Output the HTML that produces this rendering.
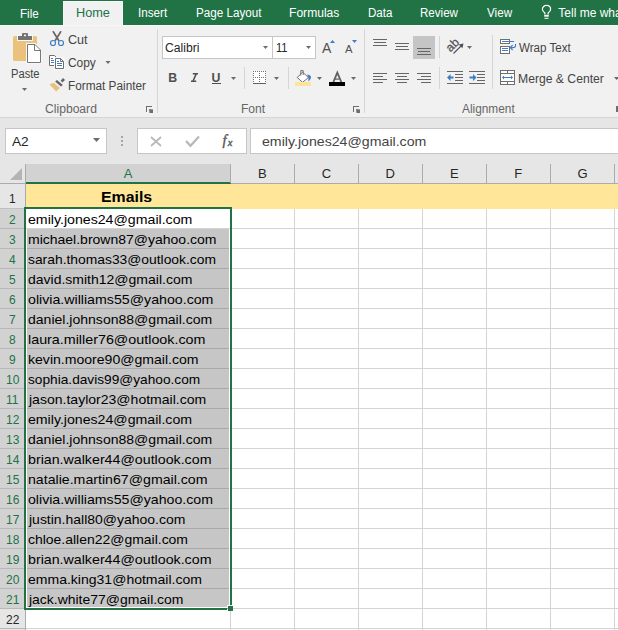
<!DOCTYPE html>
<html><head><meta charset="utf-8"><style>
html,body{margin:0;padding:0;width:618px;height:630px;overflow:hidden;background:#fff;}
body>div{position:absolute;}
.t{position:absolute;white-space:pre;font-family:"Liberation Sans",sans-serif;transform-origin:0 0;}
svg{position:absolute;left:0;top:0;}
</style></head><body>
<div style="left:0px;top:0px;width:618px;height:25px;background:#217346;"></div>
<div style="left:63px;top:1px;width:60px;height:25px;background:#f1f1f1;"></div>
<div class="t" style="left:19.97px;top:4px;font-size:12px;line-height:20px;color:#ffffff;transform:scaleX(0.9708);">File</div>
<div class="t" style="left:75.68px;top:3px;font-size:12px;line-height:20px;color:#217346;transform:scaleX(1.0597);">Home</div>
<div class="t" style="left:137.70px;top:3px;font-size:12px;line-height:20px;color:#ffffff;transform:scaleX(0.9719);">Insert</div>
<div class="t" style="left:195.67px;top:3px;font-size:12px;line-height:20px;color:#ffffff;transform:scaleX(0.9705);">Page Layout</div>
<div class="t" style="left:289.03px;top:3px;font-size:12px;line-height:20px;color:#ffffff;transform:scaleX(1.0070);">Formulas</div>
<div class="t" style="left:367.57px;top:3px;font-size:12px;line-height:20px;color:#ffffff;transform:scaleX(0.9647);">Data</div>
<div class="t" style="left:420.07px;top:3px;font-size:12px;line-height:20px;color:#ffffff;transform:scaleX(0.9635);">Review</div>
<div class="t" style="left:486.94px;top:3px;font-size:12px;line-height:20px;color:#ffffff;transform:scaleX(0.9713);">View</div>
<div class="t" style="left:558.36px;top:3px;font-size:12px;line-height:20px;color:#ffffff;">Tell me what you want to do</div>
<div style="left:0px;top:25px;width:618px;height:92px;background:#f1f1f1;"></div>
<div style="left:0px;top:117px;width:618px;height:1px;background:#d5d5d5;"></div>
<div class="t" style="left:10.91px;top:64px;font-size:12px;line-height:20px;color:#444444;transform:scaleX(0.9294);">Paste</div>
<div class="t" style="left:67.67px;top:30px;font-size:12px;line-height:20px;color:#444444;transform:scaleX(1.0500);">Cut</div>
<div class="t" style="left:68.10px;top:53px;font-size:12px;line-height:20px;color:#444444;transform:scaleX(0.9920);">Copy</div>
<div class="t" style="left:67.76px;top:76px;font-size:12px;line-height:20px;color:#444444;transform:scaleX(0.9823);">Format Painter</div>
<div class="t" style="left:44.69px;top:99px;font-size:12px;line-height:20px;color:#666666;transform:scaleX(1.0104);">Clipboard</div>
<div class="t" style="left:240.73px;top:99px;font-size:12px;line-height:20px;color:#666666;transform:scaleX(1.0052);">Font</div>
<div class="t" style="left:462.20px;top:99px;font-size:12px;line-height:20px;color:#666666;transform:scaleX(0.9872);">Alignment</div>
<div class="t" style="left:519.34px;top:38px;font-size:12px;line-height:20px;color:#444444;transform:scaleX(0.9644);">Wrap Text</div>
<div class="t" style="left:518.33px;top:69px;font-size:12px;line-height:20px;color:#444444;transform:scaleX(1.0141);">Merge &amp; Center</div>
<div style="left:157px;top:29px;width:1px;height:84px;background:#d5d5d5;"></div>
<div style="left:364px;top:29px;width:1px;height:84px;background:#d5d5d5;"></div>
<div style="left:162px;top:36px;width:154px;height:23px;background:#ffffff;box-sizing:border-box;border:1px solid #c6c6c6;"></div>
<div style="left:272px;top:36px;width:1px;height:23px;background:#c6c6c6;"></div>
<div class="t" style="left:164.99px;top:38px;font-size:12px;line-height:20px;color:#262626;transform:scaleX(1.0129);">Calibri</div>
<div class="t" style="left:275.97px;top:38px;font-size:12px;line-height:20px;color:#262626;transform:scaleX(0.9199);">11</div>
<div style="left:244px;top:67px;width:1px;height:22px;background:#d5d5d5;"></div>
<div style="left:288px;top:67px;width:1px;height:22px;background:#d5d5d5;"></div>
<div style="left:439px;top:36px;width:1px;height:22px;background:#d5d5d5;"></div>
<div style="left:439px;top:67px;width:1px;height:22px;background:#d5d5d5;"></div>
<div style="left:492px;top:35px;width:1px;height:54px;background:#d5d5d5;"></div>
<div style="left:413px;top:36px;width:22px;height:23px;background:#c5c5c5;"></div>
<div style="left:0px;top:118px;width:618px;height:46px;background:#e6e6e6;"></div>
<div style="left:5px;top:128px;width:102px;height:26px;background:#ffffff;box-sizing:border-box;border:1px solid #c6c6c6;"></div>
<div class="t" style="left:12.00px;top:132px;font-size:13px;line-height:20px;color:#262626;transform:scaleX(1.0519);">A2</div>
<div style="left:137px;top:128px;width:110px;height:26px;background:#ffffff;box-sizing:border-box;border:1px solid #c6c6c6;"></div>
<div style="left:250px;top:128px;width:380px;height:26px;background:#ffffff;box-sizing:border-box;border:1px solid #c6c6c6;"></div>
<div class="t" style="left:261.93px;top:132px;font-size:13px;line-height:20px;color:#444444;transform:scaleX(1.0887);">emily.jones24@gmail.com</div>
<div style="left:0px;top:164px;width:618px;height:20px;background:#e6e6e6;"></div>
<div style="left:26px;top:164px;width:205px;height:20px;background:#d2d2d2;"></div>
<div style="left:0px;top:183px;width:618px;height:1px;background:#ababab;"></div>
<div style="left:25px;top:182px;width:206px;height:2px;background:#217346;"></div>
<div style="left:26px;top:184px;width:592px;height:446px;background:#ffffff;"></div>
<div style="left:0px;top:184px;width:25px;height:446px;background:#e6e6e6;"></div>
<div style="left:0px;top:209px;width:25px;height:400px;background:#d2d2d2;"></div>
<div style="left:25px;top:164px;width:1px;height:466px;background:#ababab;"></div>
<div style="left:230px;top:164px;width:1px;height:19px;background:#ababab;"></div>
<div style="left:230px;top:209px;width:1px;height:421px;background:#d4d4d4;"></div>
<div style="left:294px;top:164px;width:1px;height:19px;background:#ababab;"></div>
<div style="left:294px;top:209px;width:1px;height:421px;background:#d4d4d4;"></div>
<div style="left:358px;top:164px;width:1px;height:19px;background:#ababab;"></div>
<div style="left:358px;top:209px;width:1px;height:421px;background:#d4d4d4;"></div>
<div style="left:422px;top:164px;width:1px;height:19px;background:#ababab;"></div>
<div style="left:422px;top:209px;width:1px;height:421px;background:#d4d4d4;"></div>
<div style="left:486px;top:164px;width:1px;height:19px;background:#ababab;"></div>
<div style="left:486px;top:209px;width:1px;height:421px;background:#d4d4d4;"></div>
<div style="left:550px;top:164px;width:1px;height:19px;background:#ababab;"></div>
<div style="left:550px;top:209px;width:1px;height:421px;background:#d4d4d4;"></div>
<div style="left:614px;top:164px;width:1px;height:19px;background:#ababab;"></div>
<div style="left:614px;top:209px;width:1px;height:421px;background:#d4d4d4;"></div>
<div style="left:26px;top:228px;width:592px;height:1px;background:#d4d4d4;"></div>
<div style="left:26px;top:248px;width:592px;height:1px;background:#d4d4d4;"></div>
<div style="left:26px;top:268px;width:592px;height:1px;background:#d4d4d4;"></div>
<div style="left:26px;top:288px;width:592px;height:1px;background:#d4d4d4;"></div>
<div style="left:26px;top:308px;width:592px;height:1px;background:#d4d4d4;"></div>
<div style="left:26px;top:328px;width:592px;height:1px;background:#d4d4d4;"></div>
<div style="left:26px;top:348px;width:592px;height:1px;background:#d4d4d4;"></div>
<div style="left:26px;top:368px;width:592px;height:1px;background:#d4d4d4;"></div>
<div style="left:26px;top:388px;width:592px;height:1px;background:#d4d4d4;"></div>
<div style="left:26px;top:408px;width:592px;height:1px;background:#d4d4d4;"></div>
<div style="left:26px;top:428px;width:592px;height:1px;background:#d4d4d4;"></div>
<div style="left:26px;top:448px;width:592px;height:1px;background:#d4d4d4;"></div>
<div style="left:26px;top:468px;width:592px;height:1px;background:#d4d4d4;"></div>
<div style="left:26px;top:488px;width:592px;height:1px;background:#d4d4d4;"></div>
<div style="left:26px;top:508px;width:592px;height:1px;background:#d4d4d4;"></div>
<div style="left:26px;top:528px;width:592px;height:1px;background:#d4d4d4;"></div>
<div style="left:26px;top:548px;width:592px;height:1px;background:#d4d4d4;"></div>
<div style="left:26px;top:568px;width:592px;height:1px;background:#d4d4d4;"></div>
<div style="left:26px;top:588px;width:592px;height:1px;background:#d4d4d4;"></div>
<div style="left:26px;top:608px;width:592px;height:1px;background:#d4d4d4;"></div>
<div style="left:26px;top:628px;width:592px;height:1px;background:#d4d4d4;"></div>
<div style="left:0px;top:208px;width:25px;height:1px;background:#c0c0c0;"></div>
<div style="left:0px;top:228px;width:25px;height:1px;background:#b8b8b8;"></div>
<div style="left:0px;top:248px;width:25px;height:1px;background:#b8b8b8;"></div>
<div style="left:0px;top:268px;width:25px;height:1px;background:#b8b8b8;"></div>
<div style="left:0px;top:288px;width:25px;height:1px;background:#b8b8b8;"></div>
<div style="left:0px;top:308px;width:25px;height:1px;background:#b8b8b8;"></div>
<div style="left:0px;top:328px;width:25px;height:1px;background:#b8b8b8;"></div>
<div style="left:0px;top:348px;width:25px;height:1px;background:#b8b8b8;"></div>
<div style="left:0px;top:368px;width:25px;height:1px;background:#b8b8b8;"></div>
<div style="left:0px;top:388px;width:25px;height:1px;background:#b8b8b8;"></div>
<div style="left:0px;top:408px;width:25px;height:1px;background:#b8b8b8;"></div>
<div style="left:0px;top:428px;width:25px;height:1px;background:#b8b8b8;"></div>
<div style="left:0px;top:448px;width:25px;height:1px;background:#b8b8b8;"></div>
<div style="left:0px;top:468px;width:25px;height:1px;background:#b8b8b8;"></div>
<div style="left:0px;top:488px;width:25px;height:1px;background:#b8b8b8;"></div>
<div style="left:0px;top:508px;width:25px;height:1px;background:#b8b8b8;"></div>
<div style="left:0px;top:528px;width:25px;height:1px;background:#b8b8b8;"></div>
<div style="left:0px;top:548px;width:25px;height:1px;background:#b8b8b8;"></div>
<div style="left:0px;top:568px;width:25px;height:1px;background:#b8b8b8;"></div>
<div style="left:0px;top:588px;width:25px;height:1px;background:#b8b8b8;"></div>
<div style="left:0px;top:608px;width:25px;height:1px;background:#b8b8b8;"></div>
<div style="left:0px;top:628px;width:25px;height:1px;background:#b8b8b8;"></div>
<div style="left:26px;top:184px;width:592px;height:25px;background:#ffe699;"></div>
<div style="left:27px;top:229px;width:202px;height:378px;background:#c6c6c6;"></div>
<div style="left:27px;top:248px;width:202px;height:1px;background:#a9a9a9;"></div>
<div style="left:27px;top:268px;width:202px;height:1px;background:#a9a9a9;"></div>
<div style="left:27px;top:288px;width:202px;height:1px;background:#a9a9a9;"></div>
<div style="left:27px;top:308px;width:202px;height:1px;background:#a9a9a9;"></div>
<div style="left:27px;top:328px;width:202px;height:1px;background:#a9a9a9;"></div>
<div style="left:27px;top:348px;width:202px;height:1px;background:#a9a9a9;"></div>
<div style="left:27px;top:368px;width:202px;height:1px;background:#a9a9a9;"></div>
<div style="left:27px;top:388px;width:202px;height:1px;background:#a9a9a9;"></div>
<div style="left:27px;top:408px;width:202px;height:1px;background:#a9a9a9;"></div>
<div style="left:27px;top:428px;width:202px;height:1px;background:#a9a9a9;"></div>
<div style="left:27px;top:448px;width:202px;height:1px;background:#a9a9a9;"></div>
<div style="left:27px;top:468px;width:202px;height:1px;background:#a9a9a9;"></div>
<div style="left:27px;top:488px;width:202px;height:1px;background:#a9a9a9;"></div>
<div style="left:27px;top:508px;width:202px;height:1px;background:#a9a9a9;"></div>
<div style="left:27px;top:528px;width:202px;height:1px;background:#a9a9a9;"></div>
<div style="left:27px;top:548px;width:202px;height:1px;background:#a9a9a9;"></div>
<div style="left:27px;top:568px;width:202px;height:1px;background:#a9a9a9;"></div>
<div style="left:27px;top:588px;width:202px;height:1px;background:#a9a9a9;"></div>
<div style="left:27px;top:608px;width:202px;height:1px;background:#a9a9a9;"></div>
<div style="left:26px;top:229px;width:1px;height:379px;background:#ffffff;"></div>
<div style="left:229px;top:229px;width:1px;height:377px;background:#ffffff;"></div>
<div style="left:24px;top:207px;width:207px;height:2px;background:#217346;"></div>
<div style="left:24px;top:207px;width:2px;height:403px;background:#217346;"></div>
<div style="left:230px;top:207px;width:2px;height:398px;background:#217346;"></div>
<div style="left:24px;top:608px;width:203px;height:2px;background:#217346;"></div>
<div style="left:228px;top:606px;width:5px;height:5px;background:#217346;"></div>
<div class="t" style="left:123.68px;top:164px;font-size:13px;line-height:20px;color:#217346;">A</div>
<div class="t" style="left:257.98px;top:164px;font-size:13px;line-height:20px;color:#262626;">B</div>
<div class="t" style="left:321.72px;top:164px;font-size:13px;line-height:20px;color:#262626;">C</div>
<div class="t" style="left:385.59px;top:164px;font-size:13px;line-height:20px;color:#262626;">D</div>
<div class="t" style="left:449.92px;top:164px;font-size:13px;line-height:20px;color:#262626;">E</div>
<div class="t" style="left:514.28px;top:164px;font-size:13px;line-height:20px;color:#262626;">F</div>
<div class="t" style="left:577.59px;top:164px;font-size:13px;line-height:20px;color:#262626;">G</div>
<div class="t" style="left:9.20px;top:189px;font-size:13px;line-height:20px;color:#262626;transform:scaleX(0.9200);">1</div>
<div class="t" style="left:9.38px;top:210px;font-size:13px;line-height:20px;color:#217346;transform:scaleX(0.9200);">2</div>
<div class="t" style="left:9.38px;top:230px;font-size:13px;line-height:20px;color:#217346;transform:scaleX(0.9200);">3</div>
<div class="t" style="left:9.44px;top:250px;font-size:13px;line-height:20px;color:#217346;transform:scaleX(0.9200);">4</div>
<div class="t" style="left:9.38px;top:270px;font-size:13px;line-height:20px;color:#217346;transform:scaleX(0.9200);">5</div>
<div class="t" style="left:9.32px;top:290px;font-size:13px;line-height:20px;color:#217346;transform:scaleX(0.9200);">6</div>
<div class="t" style="left:9.38px;top:310px;font-size:13px;line-height:20px;color:#217346;transform:scaleX(0.9200);">7</div>
<div class="t" style="left:9.35px;top:330px;font-size:13px;line-height:20px;color:#217346;transform:scaleX(0.9200);">8</div>
<div class="t" style="left:9.38px;top:350px;font-size:13px;line-height:20px;color:#217346;transform:scaleX(0.9200);">9</div>
<div class="t" style="left:5.82px;top:370px;font-size:13px;line-height:20px;color:#217346;transform:scaleX(0.9200);">10</div>
<div class="t" style="left:6.33px;top:390px;font-size:13px;line-height:20px;color:#217346;transform:scaleX(0.9200);">11</div>
<div class="t" style="left:5.91px;top:410px;font-size:13px;line-height:20px;color:#217346;transform:scaleX(0.9200);">12</div>
<div class="t" style="left:5.85px;top:430px;font-size:13px;line-height:20px;color:#217346;transform:scaleX(0.9200);">13</div>
<div class="t" style="left:5.79px;top:450px;font-size:13px;line-height:20px;color:#217346;transform:scaleX(0.9200);">14</div>
<div class="t" style="left:5.85px;top:470px;font-size:13px;line-height:20px;color:#217346;transform:scaleX(0.9200);">15</div>
<div class="t" style="left:5.85px;top:490px;font-size:13px;line-height:20px;color:#217346;transform:scaleX(0.9200);">16</div>
<div class="t" style="left:5.91px;top:510px;font-size:13px;line-height:20px;color:#217346;transform:scaleX(0.9200);">17</div>
<div class="t" style="left:5.85px;top:530px;font-size:13px;line-height:20px;color:#217346;transform:scaleX(0.9200);">18</div>
<div class="t" style="left:5.88px;top:550px;font-size:13px;line-height:20px;color:#217346;transform:scaleX(0.9200);">19</div>
<div class="t" style="left:5.97px;top:570px;font-size:13px;line-height:20px;color:#217346;transform:scaleX(0.9200);">20</div>
<div class="t" style="left:6.03px;top:590px;font-size:13px;line-height:20px;color:#217346;transform:scaleX(0.9200);">21</div>
<div class="t" style="left:6.06px;top:610px;font-size:13px;line-height:20px;color:#262626;transform:scaleX(0.9200);">22</div>
<div class="t" style="left:27.93px;top:210px;font-size:13.5px;line-height:20px;color:#000000;transform:scaleX(1.0484);">emily.jones24@gmail.com</div>
<div class="t" style="left:27.59px;top:230px;font-size:13.5px;line-height:20px;color:#000000;transform:scaleX(1.0367);">michael.brown87@yahoo.com</div>
<div class="t" style="left:28.08px;top:250px;font-size:13.5px;line-height:20px;color:#000000;transform:scaleX(1.0256);">sarah.thomas33@outlook.com</div>
<div class="t" style="left:27.94px;top:270px;font-size:13.5px;line-height:20px;color:#000000;transform:scaleX(1.0367);">david.smith12@gmail.com</div>
<div class="t" style="left:27.93px;top:290px;font-size:13.5px;line-height:20px;color:#000000;transform:scaleX(1.0505);">olivia.williams55@yahoo.com</div>
<div class="t" style="left:27.94px;top:310px;font-size:13.5px;line-height:20px;color:#000000;transform:scaleX(1.0392);">daniel.johnson88@gmail.com</div>
<div class="t" style="left:27.57px;top:330px;font-size:13.5px;line-height:20px;color:#000000;transform:scaleX(1.0592);">laura.miller76@outlook.com</div>
<div class="t" style="left:27.59px;top:350px;font-size:13.5px;line-height:20px;color:#000000;transform:scaleX(1.0415);">kevin.moore90@gmail.com</div>
<div class="t" style="left:28.09px;top:370px;font-size:13.5px;line-height:20px;color:#000000;transform:scaleX(1.0140);">sophia.davis99@yahoo.com</div>
<div class="t" style="left:28.85px;top:390px;font-size:13.5px;line-height:20px;color:#000000;transform:scaleX(1.0392);">jason.taylor23@hotmail.com</div>
<div class="t" style="left:27.93px;top:410px;font-size:13.5px;line-height:20px;color:#000000;transform:scaleX(1.0464);">emily.jones24@gmail.com</div>
<div class="t" style="left:27.94px;top:430px;font-size:13.5px;line-height:20px;color:#000000;transform:scaleX(1.0392);">daniel.johnson88@gmail.com</div>
<div class="t" style="left:27.58px;top:450px;font-size:13.5px;line-height:20px;color:#000000;transform:scaleX(1.0527);">brian.walker44@outlook.com</div>
<div class="t" style="left:27.58px;top:470px;font-size:13.5px;line-height:20px;color:#000000;transform:scaleX(1.0480);">natalie.martin67@gmail.com</div>
<div class="t" style="left:27.93px;top:490px;font-size:13.5px;line-height:20px;color:#000000;transform:scaleX(1.0476);">olivia.williams55@yahoo.com</div>
<div class="t" style="left:28.85px;top:510px;font-size:13.5px;line-height:20px;color:#000000;transform:scaleX(1.0350);">justin.hall80@yahoo.com</div>
<div class="t" style="left:27.94px;top:530px;font-size:13.5px;line-height:20px;color:#000000;transform:scaleX(1.0337);">chloe.allen22@gmail.com</div>
<div class="t" style="left:27.58px;top:550px;font-size:13.5px;line-height:20px;color:#000000;transform:scaleX(1.0527);">brian.walker44@outlook.com</div>
<div class="t" style="left:27.94px;top:570px;font-size:13.5px;line-height:20px;color:#000000;transform:scaleX(1.0384);">emma.king31@hotmail.com</div>
<div class="t" style="left:28.85px;top:590px;font-size:13.5px;line-height:20px;color:#000000;transform:scaleX(1.0331);">jack.white77@gmail.com</div>
<div class="t" style="left:100.77px;top:187px;font-size:15px;line-height:20px;color:#000000;font-weight:bold;transform:scaleX(1.0577);">Emails</div>
<svg width="618" height="630" viewBox="0 0 618 630">
<!-- tab highlight -->
<rect x="0" y="25" width="618" height="1" fill="#f7f7f7"/>
<rect x="63" y="1" width="60" height="1" fill="#f7f7f7"/>
<rect x="63" y="1" width="1" height="24" fill="#f7f7f7"/>
<rect x="122" y="1" width="1" height="24" fill="#f7f7f7"/>
<!-- bulb -->
<path d="M544.9 14.6 L544.9 13 C543.1 11.8 542.4 10.6 542.4 9.3 C542.4 6.9 544.3 5.4 546.5 5.4 C548.7 5.4 550.6 6.9 550.6 9.3 C550.6 10.6 549.9 11.8 548.1 13 L548.1 14.6" fill="none" stroke="#ffffff" stroke-width="1.25"/>
<rect x="544.2" y="14.9" width="4.6" height="1.8" fill="#ffffff"/>
<rect x="544.5" y="17.8" width="4" height="1" fill="#ffffff"/>
<!-- Paste icon -->
<rect x="13" y="36" width="24" height="25" rx="1.5" fill="#eac27c"/>
<rect x="17" y="35" width="16" height="6" fill="#f7f7f7"/>
<rect x="18" y="36" width="14" height="4" fill="#737373"/>
<rect x="22" y="33" width="6" height="4" rx="1" fill="#737373"/>
<rect x="24" y="34.6" width="2" height="1.6" fill="#f4f4f4"/>
<path d="M26 43 L35.5 43 L42 49.5 L42 64 L26 64 Z" fill="#f7f7f7"/>
<path d="M27.5 44.5 L35 44.5 L40.5 50 L40.5 62.5 L27.5 62.5 Z" fill="#ffffff" stroke="#777777" stroke-width="1"/>
<path d="M34.5 44.5 L34.5 50.5 L40.5 50.5" fill="none" stroke="#777777" stroke-width="1"/>
<!-- paste dropdown -->
<path d="M22 88 L27 88 L24.5 91 Z" fill="#6b6b6b"/>
<!-- scissors -->
<g stroke="#686868" stroke-width="1.7" stroke-linecap="round" fill="none">
<path d="M53.3 31.8 L58.6 40.2"/>
<path d="M60.7 31.8 L55.4 40.2"/>
</g>
<g stroke="#3f7dc5" stroke-width="1.2" fill="none">
<circle cx="53" cy="43" r="2.5"/>
<circle cx="61" cy="43" r="2.5"/>
</g>
<!-- copy icon -->
<path d="M49.5 55.5 L54.5 55.5 L56.5 57.5 L56.5 65.5 L49.5 65.5 Z" fill="#ffffff" stroke="#6e6e6e" stroke-width="1"/>
<rect x="54" y="57" width="11" height="13" fill="#f7f7f7"/>
<path d="M55.5 58.5 L60.5 58.5 L63.5 61.5 L63.5 68.5 L55.5 68.5 Z" fill="#ffffff" stroke="#6e6e6e" stroke-width="1"/>
<path d="M60.5 58.5 L60.5 61.5 L63.5 61.5" fill="none" stroke="#6e6e6e" stroke-width="1"/>
<g fill="#3f7dc5">
<rect x="51" y="58" width="2" height="1"/>
<rect x="51" y="60" width="3" height="1"/>
<rect x="51" y="62" width="3" height="1"/>
<rect x="57" y="61" width="2" height="1"/>
<rect x="57" y="63" width="5" height="1"/>
<rect x="57" y="65" width="5" height="1"/>
</g>
<!-- copy dropdown -->
<path d="M105.5 61 L110.5 61 L108 64 Z" fill="#6b6b6b"/>
<!-- format painter -->
<path d="M49.4 84.3 L53.7 82.7 L59.9 88.1 L56.1 91.6 Z" fill="#e9c07a"/>
<path d="M55.1 81.5 L57 80 L62.9 85 L60.9 86.6 Z" fill="#666666"/>
<path d="M60.6 80.6 L63.1 78.1 L65 79.9 L62.4 82.5 Z" fill="#666666"/>
<!-- clipboard launcher -->
<g fill="#6e6e6e">
<rect x="146" y="106" width="6" height="1"/>
<rect x="146" y="106" width="1" height="6"/>
<path d="M149 109 L153 113 L153 109.5 Z M149 109 L153 113 L149.5 113 Z"/>
</g>
<!-- font dropdown arrows -->
<g fill="#6b6b6b">
<path d="M263 46 L268 46 L265.5 49 Z"/>
<path d="M306 46 L311 46 L308.5 49 Z"/>
<path d="M231 77 L236 77 L233.5 80 Z"/>
<path d="M274 77 L279 77 L276.5 80 Z"/>
<path d="M317 77 L322 77 L319.5 80 Z"/>
<path d="M351 77 L356 77 L353.5 80 Z"/>
<path d="M467 46 L472 46 L469.5 49 Z"/>
<path d="M614 77 L619 77 L616.5 80 Z"/>
<path d="M93 138 L100 138 L96.5 142 Z"/>
</g>
<!-- grow / shrink font -->
<text x="322" y="53.2" font-family="Liberation Sans" font-size="14" fill="#505050">A</text>
<text x="345" y="53.2" font-family="Liberation Sans" font-size="11.3" fill="#505050">A</text>
<path d="M330 43 L335 43 L332.5 40 Z" fill="#3f7dc5"/>
<path d="M352 40 L357 40 L354.5 43 Z" fill="#3f7dc5"/>
<!-- B I U -->
<text x="168.2" y="82" font-family="Liberation Sans" font-weight="bold" font-size="12.3" fill="#505050">B</text>
<path d="M192.8 73.8 L198 73.8 M191 81.3 L196.2 81.3 M196.2 73.8 L193 81.3" stroke="#505050" stroke-width="1.6" fill="none"/>
<text x="211.6" y="82" font-family="Liberation Sans" font-weight="bold" font-size="12.3" fill="#505050">U</text>
<rect x="212" y="83" width="9" height="1" fill="#505050"/>
<!-- borders icon -->
<rect x="253" y="71" width="13" height="13" fill="#ffffff"/>
<g fill="#707070">
<rect x="253" y="71" width="1" height="1"/><rect x="255" y="71" width="1" height="1"/><rect x="257" y="71" width="1" height="1"/><rect x="259" y="71" width="1" height="1"/><rect x="261" y="71" width="1" height="1"/><rect x="263" y="71" width="1" height="1"/><rect x="265" y="71" width="1" height="1"/>
<rect x="253" y="77" width="1" height="1"/><rect x="255" y="77" width="1" height="1"/><rect x="257" y="77" width="1" height="1"/><rect x="259" y="77" width="1" height="1"/><rect x="261" y="77" width="1" height="1"/><rect x="263" y="77" width="1" height="1"/><rect x="265" y="77" width="1" height="1"/>
<rect x="253" y="73" width="1" height="1"/><rect x="259" y="73" width="1" height="1"/><rect x="265" y="73" width="1" height="1"/>
<rect x="253" y="75" width="1" height="1"/><rect x="259" y="75" width="1" height="1"/><rect x="265" y="75" width="1" height="1"/>
<rect x="253" y="79" width="1" height="1"/><rect x="259" y="79" width="1" height="1"/><rect x="265" y="79" width="1" height="1"/>
<rect x="253" y="81" width="1" height="1"/><rect x="259" y="81" width="1" height="1"/><rect x="265" y="81" width="1" height="1"/>
<rect x="253" y="83" width="13" height="1" fill="#606060"/>
</g>
<!-- fill color -->
<path d="M297.2 77.5 L302.6 72.1 L308.4 77.5 L302.6 82.3 Z" fill="#ffffff" stroke="#707070" stroke-width="1"/>
<path d="M300.8 75.6 L300.8 70.6 L303.2 70.6 L303.2 75" fill="none" stroke="#707070" stroke-width="1"/>
<path d="M307.2 74.4 C309.5 74.6 311.2 75.6 311 77.5 C310.8 79 309.8 80.3 308.4 81.6 L308.4 77.5 Z" fill="#3f7dc5"/>
<rect x="295" y="82" width="16" height="4" fill="#fce49a"/>
<!-- font color -->
<path d="M333.4 82 L337.3 72.6 L341.3 82" fill="none" stroke="#606060" stroke-width="1.8"/>
<rect x="335" y="78.5" width="4.6" height="1.2" fill="#606060"/>
<rect x="329" y="82" width="16" height="4" fill="#000000"/>
<!-- align icons -->
<g fill="#666666">
<rect x="373" y="39" width="14" height="1"/><rect x="374" y="42" width="12" height="1"/><rect x="373" y="45" width="14" height="1"/>
<rect x="395" y="43" width="14" height="1"/><rect x="396" y="46" width="12" height="1"/><rect x="395" y="49" width="14" height="1"/>
<rect x="417" y="48" width="14" height="1"/><rect x="418" y="51" width="12" height="1"/><rect x="417" y="54" width="14" height="1"/>
<rect x="373" y="73" width="14" height="1"/><rect x="373" y="76" width="10" height="1"/><rect x="373" y="79" width="14" height="1"/><rect x="373" y="82" width="10" height="1"/>
<rect x="395" y="73" width="14" height="1"/><rect x="397" y="76" width="10" height="1"/><rect x="395" y="79" width="14" height="1"/><rect x="397" y="82" width="10" height="1"/>
<rect x="417" y="73" width="14" height="1"/><rect x="421" y="76" width="10" height="1"/><rect x="417" y="79" width="14" height="1"/><rect x="421" y="82" width="10" height="1"/>
<!-- indent lines -->
<rect x="447" y="71" width="16" height="1"/><rect x="455" y="74" width="8" height="1"/><rect x="455" y="77" width="8" height="1"/><rect x="455" y="80" width="8" height="1"/><rect x="447" y="83" width="16" height="1"/>
<rect x="469" y="71" width="16" height="1"/><rect x="477" y="74" width="8" height="1"/><rect x="477" y="77" width="8" height="1"/><rect x="477" y="80" width="8" height="1"/><rect x="469" y="83" width="16" height="1"/>
</g>
<path d="M447 77.5 L450.5 74 L450.5 76.6 L453.5 76.6 L453.5 78.4 L450.5 78.4 L450.5 81 Z" fill="#3f7dc5"/>
<path d="M476.5 77.5 L473 74 L473 76.6 L469.5 76.6 L469.5 78.4 L473 78.4 L473 81 Z" fill="#3f7dc5"/>
<!-- orientation ab -->
<text x="0" y="0" font-family="Liberation Sans" font-size="12" fill="#505050" stroke="#505050" stroke-width="0.25" transform="translate(450.5,52.5) rotate(-45)">ab</text>
<path d="M453.5 53.5 L462.5 44.5" stroke="#505050" stroke-width="1.1" fill="none"/>
<path d="M463.5 43.5 L458.8 44.6 L462.4 48.2 Z" fill="#505050"/>
<!-- wrap text icon -->
<g fill="#ffffff" stroke="#6e6e6e" stroke-width="1">
<rect x="500.5" y="39.5" width="9" height="4"/>
<rect x="500.5" y="46.5" width="9" height="7"/>
</g>
<g fill="#3f7dc5">
<rect x="502" y="41" width="12" height="1"/>
<rect x="502" y="48" width="6" height="1"/>
<rect x="502" y="50" width="6" height="1"/>
</g>
<path d="M515.5 44 L515.5 45.5 C515.5 47 514.5 47.6 513 47.6 L510.5 47.6" stroke="#3f7dc5" stroke-width="1.1" fill="none"/>
<path d="M512.6 45.2 L510.3 47.6 L512.6 50" fill="none" stroke="#3f7dc5" stroke-width="1.2"/>
<!-- merge icon -->
<rect x="500.5" y="70.5" width="14" height="14" fill="#ffffff" stroke="#6e6e6e" stroke-width="1"/>
<g fill="#6e6e6e">
<rect x="500" y="73" width="15" height="1"/>
<rect x="500" y="81" width="15" height="1"/>
<rect x="507" y="70" width="1" height="4"/>
<rect x="507" y="81" width="1" height="4"/>
</g>
<rect x="503" y="77" width="9" height="1" fill="#3f7dc5"/>
<path d="M502 77.5 L504 75.5 L504 79.5 Z M513 77.5 L511 75.5 L511 79.5 Z" fill="#3f7dc5"/>
<!-- font launcher -->
<g fill="#6e6e6e">
<rect x="353" y="106" width="6" height="1"/>
<rect x="353" y="106" width="1" height="6"/>
<path d="M356 109 L360 113 L360 109.5 Z M356 109 L360 113 L356.5 113 Z"/>
<rect x="616" y="106" width="2" height="6"/>
</g>
<!-- name box dots -->
<g fill="#a6a6a6">
<rect x="121" y="136" width="2" height="2"/>
<rect x="121" y="140" width="2" height="2"/>
<rect x="121" y="144" width="2" height="2"/>
</g>
<!-- formula X check fx -->
<path d="M151 137 L161 146 M161 137 L151 146" stroke="#b8b8b8" stroke-width="1.7" fill="none"/>
<path d="M186 141 L190.5 145.8 L199 136.5" stroke="#b8b8b8" stroke-width="2.2" fill="none"/>
<text x="222.5" y="145" font-family="Liberation Serif" font-style="italic" font-size="14.5" fill="#555555" stroke="#555555" stroke-width="0.35">f</text>
<text x="227.8" y="145.8" font-family="Liberation Serif" font-style="italic" font-size="10.5" fill="#555555" stroke="#555555" stroke-width="0.35">x</text>
<!-- corner triangle -->
<path d="M10 180 L22 168 L22 180 Z" fill="#b4b4b4"/>

<rect x="227" y="605" width="2" height="1" fill="#ffffff"/><rect x="227" y="606" width="1" height="1" fill="#ffffff"/>

</svg>
</body></html>
